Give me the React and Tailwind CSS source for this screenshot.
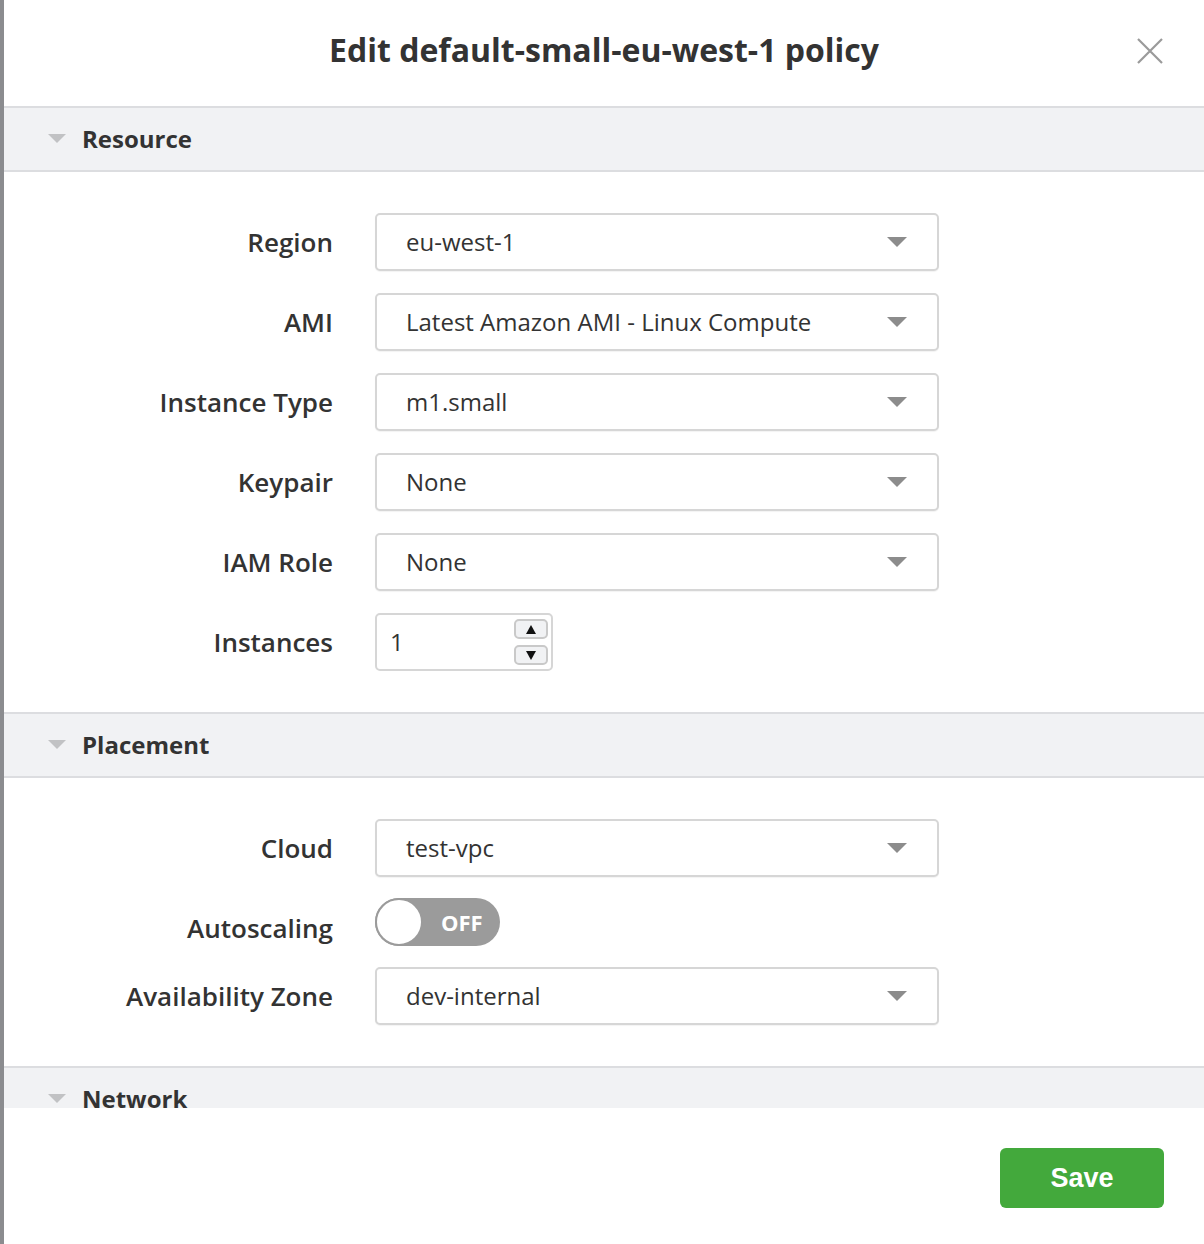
import React from "react";

const font = { fontFamily: '"Open Sans", "Liberation Sans", sans-serif' };

function Caret() {
  return (
    <svg width="18" height="10" viewBox="0 0 18 10" className="shrink-0">
      <polygon points="0,0 18,0 9,9" fill="#c1c2c4" />
    </svg>
  );
}

function SectionHeader({ title }) {
  return (
    <div className="flex h-[66px] items-center border-y-2 border-[#dcdde0] bg-[#f1f2f4] pl-[44px]">
      <Caret />
      <span className="ml-[16px] text-[24px] font-bold text-[#333]">{title}</span>
    </div>
  );
}

function Row({ label, children, labelClass = "" }) {
  return (
    <div className="flex items-center">
      <div className={"w-[329px] text-right text-[26px] font-semibold text-[#333] " + labelClass}>{label}</div>
      <div className="ml-[42px]">{children}</div>
    </div>
  );
}

function Select({ value }) {
  return (
    <div className="flex h-[58px] w-[564px] items-center justify-between rounded-[5px] border-2 border-[#d6d6d6] bg-white pl-[29px] pr-[30px] shadow-[0_1px_1px_rgba(0,0,0,0.05)]">
      <span className="text-[24px] text-[#333]">{value}</span>
      <svg width="20" height="11" viewBox="0 0 20 11">
        <polygon points="0,0 20,0 10,10" fill="#8c8c8c" />
      </svg>
    </div>
  );
}

function NumberInput() {
  return (
    <div className="flex h-[58px] w-[178px] items-center justify-between rounded-[5px] border-2 border-[#d6d6d6] bg-white pl-[13px] pr-[3px]">
      <span className="text-[24px] text-[#333]">1</span>
      <div className="flex flex-col gap-[6px]">
        <div className="flex h-[20px] w-[34px] items-center justify-center rounded-[5px] border-2 border-[#c9c9c9] bg-[#f1f2f4]">
          <svg width="10" height="9" viewBox="0 0 10 9"><polygon points="5,0 10,9 0,9" fill="#111" /></svg>
        </div>
        <div className="flex h-[20px] w-[34px] items-center justify-center rounded-[5px] border-2 border-[#c9c9c9] bg-[#f1f2f4]">
          <svg width="10" height="9" viewBox="0 0 10 9"><polygon points="0,0 10,0 5,9" fill="#111" /></svg>
        </div>
      </div>
    </div>
  );
}

function Toggle() {
  return (
    <div className="relative flex h-[48px] w-[125px] items-center rounded-full bg-[#9b9b9b]">
      <div className="absolute left-0 top-0 h-[48px] w-[48px] rounded-full border-2 border-[#9b9b9b] bg-white" />
      <span className="ml-[66px] text-[22px] font-bold text-white">OFF</span>
    </div>
  );
}

export default function App() {
  return (
    <div className="flex h-[1244px] w-[1204px] overflow-hidden bg-white" style={font}>
      <div className="w-[4px] shrink-0 bg-[#8b8c8f]" />
      <div className="flex min-w-0 flex-1 flex-col">
        <div className="relative flex h-[106px] shrink-0 items-center justify-center">
          <h1 className="mt-[-6px] text-[32px] font-bold text-[#333]">Edit default-small-eu-west-1 policy</h1>
          <svg className="absolute right-[40px] top-[37px]" width="28" height="28" viewBox="0 0 28 28">
            <path d="M2 2 L26 26 M26 2 L2 26" stroke="#9a9a9a" strokeWidth="2.2" />
          </svg>
        </div>
        <div className="flex-1 overflow-hidden">
          <SectionHeader title="Resource" />
          <div className="flex flex-col gap-[22px] py-[41px]">
            <Row label="Region"><Select value="eu-west-1" /></Row>
            <Row label="AMI"><Select value="Latest Amazon AMI - Linux Compute" /></Row>
            <Row label="Instance Type"><Select value="m1.small" /></Row>
            <Row label="Keypair"><Select value="None" /></Row>
            <Row label="IAM Role"><Select value="None" /></Row>
            <Row label="Instances"><NumberInput /></Row>
          </div>
          <SectionHeader title="Placement" />
          <div className="flex flex-col gap-[21px] py-[41px]">
            <Row label="Cloud"><Select value="test-vpc" /></Row>
            <Row label="Autoscaling" labelClass="mt-[12px] leading-[36px]"><Toggle /></Row>
            <Row label="Availability Zone"><Select value="dev-internal" /></Row>
          </div>
          <SectionHeader title="Network" />
        </div>
        <div className="flex h-[136px] shrink-0 items-center justify-end bg-white pr-[40px] pt-[4px]">
          <button
            className="h-[60px] w-[164px] rounded-[6px] bg-[#43a93c] text-[27px] font-bold text-white"
            style={{ fontFamily: '"Liberation Sans", Arial, sans-serif' }}
          >
            Save
          </button>
        </div>
      </div>
    </div>
  );
}
